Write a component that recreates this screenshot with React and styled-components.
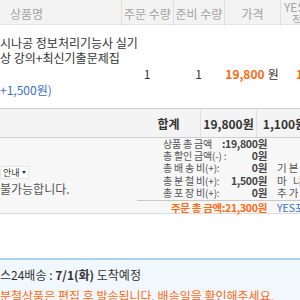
import React from 'react';
import styled, { createGlobalStyle } from 'styled-components';

const Global = createGlobalStyle`
  body {
    margin: 0;
    background: #fff;
    font-family: "Noto Sans CJK KR", "Noto Sans", sans-serif;
    color: #333;
  }
`;

const Page = styled.div`
  width: 300px;
  height: 300px;
  overflow: hidden;
  font-size: 12px;
`;

const cols = '121px 52px 51px 56px 60px';

const HeadRow = styled.div`
  display: grid;
  grid-template-columns: ${cols};
  height: 25px;
  background: #f3f3f3;
  border-bottom: 1px solid #e4e4e4;
  color: #a3a3a3;
  box-sizing: border-box;
`;

const HeadCell = styled.div`
  display: flex;
  align-items: center;
  justify-content: ${p => (p.left ? 'flex-start' : 'center')};
  padding-left: ${p => p.pl || '0'};
  border-left: ${p => (p.first ? 'none' : '1px solid #e0e0e0')};
  line-height: 13px;
  white-space: nowrap;
`;

const BodyRow = styled.div`
  display: grid;
  grid-template-columns: ${cols};
  height: 84px;
  border-bottom: 1px solid #cfcfcf;
  box-sizing: border-box;
`;

const Product = styled.div`
  padding-top: 10px;
  line-height: 15px;
  white-space: nowrap;
`;

const Option = styled.div`
  margin-top: 17px;
  color: #3b6fc9;
`;

const Cell = styled.div`
  padding-top: 40px;
  text-align: ${p => p.align || 'center'};
  padding-left: ${p => p.pl || 0};
  color: ${p => p.color || '#333'};
  font-weight: ${p => (p.bold ? 'bold' : 'normal')};
  white-space: nowrap;
`;

const Won = styled.span`
  color: #333;
  font-weight: normal;
  margin-left: 3px;
`;

const SumRow = styled.div`
  display: grid;
  grid-template-columns: 137px 63px 56px 56px;
  height: 29px;
  background: #f4f4f4;
  border-bottom: 1px solid #cfcfcf;
  box-sizing: border-box;
`;

const SumCell = styled.div`
  display: flex;
  align-items: center;
  justify-content: center;
  font-weight: bold;
  color: #333;
  border-left: ${p => (p.line ? '1px solid #e0e0e0' : 'none')};
  white-space: nowrap;
`;

const Summary = styled.div`
  display: grid;
  grid-template-columns: 137px 163px;
  height: 76px;
  background: #f7f7f7;
  border-bottom: 1px solid #dcdcdc;
  box-sizing: border-box;
`;

const Notice = styled.div`
  padding-top: 24px;
  font-size: 12px;
  color: #555;
`;

const GuideBtn = styled.span`
  display: inline-flex;
  align-items: center;
  gap: 2px;
  background: #fff;
  border: 1px solid #e6e6e6;
  padding: 0 2px;
  font-size: 9px;
  line-height: 11px;
  color: #333;
  &::after {
    content: '';
    border-left: 2px solid transparent;
    border-right: 2px solid transparent;
    border-top: 3px solid #333;
  }
`;

const NoticeText = styled.div`
  margin-top: 2px;
  line-height: 15px;
`;

const Totals = styled.div`
  display: flex;
  flex-direction: column;
  font-size: 10.5px;
  white-space: nowrap;
`;

const Line = styled.div`
  display: flex;
  height: 12.2px;
  line-height: 12.2px;
  color: #555;
`;

const Pair = styled.div`
  display: flex;
  justify-content: space-between;
  flex-shrink: 0;
  width: 104px;
  margin-left: 26px;
`;

const Label = styled.span`
  font-size: 10px;
  letter-spacing: -0.2px;
`;

const Value = styled.span`
  font-weight: bold;
  color: #444;
  letter-spacing: -0.3px;
`;

const Extra = styled.span`
  flex-shrink: 0;
  padding-left: 10px;
  letter-spacing: 2px;
`;

const TotalLine = styled.div`
  display: flex;
  margin-top: 1px;
  border-top: 1px solid #c8c8c8;
  line-height: 12px;
  padding-top: 1px;
  font-weight: bold;
  color: #ff6a13;
`;

const TotalText = styled.span`
  flex-shrink: 0;
  width: 130px;
  text-align: right;
  letter-spacing: -0.3px;
`;

const Point = styled.span`
  flex-shrink: 0;
  padding-left: 10px;
  color: #3b6fc9;
  font-weight: normal;
`;

const Gap = styled.div`
  height: 44px;
`;

const Delivery = styled.div`
  border-top: 2px solid #a8d2ee;
  background: #f1f8fd;
  padding-top: 4px;
  height: 60px;
  font-size: 12px;
  line-height: 21px;
  white-space: nowrap;
`;

const Warn = styled.div`
  color: #ff6a13;
`;

const items = [
  { label: '상품 총 금액', value: ':19,800원', extra: '' },
  { label: '총 할인 금액(-) :', value: '0원', extra: '' },
  { label: '총 배 송 비(+):', value: '0원', extra: '기본 배송비' },
  { label: '총 분 철 비(+):', value: '1,500원', extra: '마 나' },
  { label: '총 포 장 비(+):', value: '0원', extra: '추가 포장' },
];

const App = () => (
  <Page>
    <Global />
    <HeadRow>
      <HeadCell first left pl="10px">상품명</HeadCell>
      <HeadCell>주문 수량</HeadCell>
      <HeadCell>준비 수량</HeadCell>
      <HeadCell>가격</HeadCell>
      <HeadCell left pl="3px">YES포인트<br />&nbsp;&nbsp;&nbsp;적립</HeadCell>
    </HeadRow>
    <BodyRow>
      <Product>
        시나공 정보처리기능사 실기
        <br />
        상 강의+최신기출문제집
        <Option>+1,500원)</Option>
      </Product>
      <Cell>1</Cell>
      <Cell>1</Cell>
      <Cell bold color="#ff6a13">
        19,800<Won>원</Won>
      </Cell>
      <Cell align="left" pl="16px" bold color="#ff6a13">
        1
      </Cell>
    </BodyRow>
    <SumRow>
      <SumCell />
      <SumCell>합계</SumCell>
      <SumCell line>19,800원</SumCell>
      <SumCell line>1,100원</SumCell>
    </SumRow>
    <Summary>
      <Notice>
        <GuideBtn>안내</GuideBtn>
        <NoticeText>불가능합니다.</NoticeText>
      </Notice>
      <Totals>
        {items.map(it => (
          <Line key={it.label}>
            <Pair>
              <Label>{it.label}</Label>
              <Value>{it.value}</Value>
            </Pair>
            <Extra>{it.extra}</Extra>
          </Line>
        ))}
        <TotalLine>
          <TotalText>주문 총 금액:21,300원</TotalText>
          <Point>YES포인트</Point>
        </TotalLine>
      </Totals>
    </Summary>
    <Gap />
    <Delivery>
      <div>
        스24배송 : <b>7/1(화)</b> 도착예정
      </div>
      <Warn>분철상품은 편집 후 발송됩니다. 배송일을 확인해주세요.</Warn>
    </Delivery>
  </Page>
);

export default App;
